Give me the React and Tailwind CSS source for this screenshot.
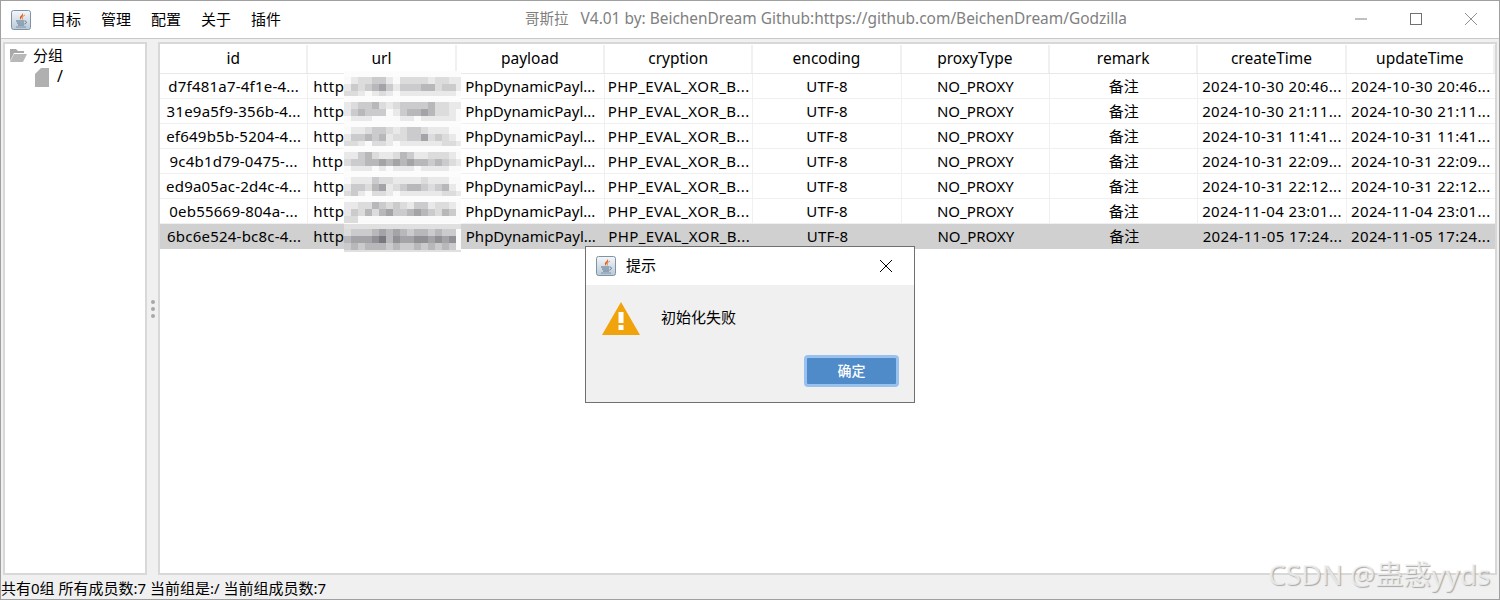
const font = {
  fontFamily: '"Noto Sans", "Noto Sans CJK SC", sans-serif',
};

const columns = [
  "id",
  "url",
  "payload",
  "cryption",
  "encoding",
  "proxyType",
  "remark",
  "createTime",
  "updateTime",
];

const rows = [
  { id: "d7f481a7-4f1e-4...", time: "2024-10-30 20:46..." },
  { id: "31e9a5f9-356b-4...", time: "2024-10-30 21:11..." },
  { id: "ef649b5b-5204-4...", time: "2024-10-31 11:41..." },
  { id: "9c4b1d79-0475-...", time: "2024-10-31 22:09..." },
  { id: "ed9a05ac-2d4c-4...", time: "2024-10-31 22:12..." },
  { id: "0eb55669-804a-...", time: "2024-11-04 23:01..." },
  { id: "6bc6e524-bc8c-4...", time: "2024-11-05 17:24..." },
];

// mosaic over the url column, one string per band of blocks
const mosaic = [
  ["01223310222212211", "13234531333442331", "22101210111111110"],
  ["12334212333342211", "13433301344542210", "01110000110111110"],
  ["01123321233211100", "13343412233523210", "22102210111111221"],
  ["11342112431122210", "23344545454434321", "01110101110111100"],
  ["01113221111211100", "13324512344323410", "23102210111111221"],
  ["11224323213312210", "13242453345432430", "22000000000000000"],
  ["23334545434434330", "45556746556656560", "34344434334343430"],
];

const levels = ["#fafafa", "#e9e9ea", "#dcdcdd", "#cbcbcd", "#b8b8bb", "#a4a4a8", "#909095", "#78787f"];

function Mosaic({ bands, selected }) {
  return (
    <svg
      className={`absolute left-[36px] z-10 ${selected ? "top-0" : "top-[-3px]"}`}
      width="117"
      height="28"
      viewBox="0 0 117 28"
    >
      <rect width="117" height="28" fill={selected ? "#e0e0e0" : "#fcfcfc"} />
      {bands.map((band, y) =>
        band.split("").map((level, x) => (
          <rect
            key={`${x}-${y}`}
            x={x * 7}
            y={(selected ? 5 : 6) + y * 7}
            width="7"
            height="7"
            fill={levels[Number(level)]}
          />
        ))
      )}
    </svg>
  );
}

function JavaIcon() {
  return (
    <svg width="20" height="20" viewBox="0 0 20 20">
      <defs>
        <linearGradient id="javaBg" x1="0" y1="0" x2="0" y2="1">
          <stop offset="0" stopColor="#f4f7fa" />
          <stop offset="1" stopColor="#b9c8d6" />
        </linearGradient>
      </defs>
      <rect x="0.5" y="0.5" width="19" height="19" rx="2" fill="url(#javaBg)" stroke="#7f93a6" />
      <path d="M11.500 2.500c1 2.500-3.500 3.500-2.500 6 .3 .8 1.200 1.500 1.200 1.500-1.200-2.500 3.500-3.500 1.300-7.500z" fill="#e2591c" />
      <path d="M14 5c-2.500 1-3 2.500-2.500 4.500" fill="none" stroke="#e88a4a" strokeWidth="1" />
      <path d="M5 11h8M6 13h7M7 15h6" stroke="#54708c" strokeWidth="1.200" />
      <path d="M13.500 11c2.500 0 2.500 2.500 0 3" fill="none" stroke="#54708c" strokeWidth="1" />
      <path d="M5 17h10" stroke="#7b92a8" strokeWidth="1" />
    </svg>
  );
}

function CloseIcon({ color }) {
  return (
    <svg width="12" height="12" viewBox="0 0 12 12">
      <path d="M0 0l12 12M12 0L0 12" stroke={color} strokeWidth="1" fill="none" />
    </svg>
  );
}

function Cell({ children, className = "" }) {
  return (
    <div className={`min-w-0 text-center leading-[24px] whitespace-nowrap overflow-hidden ${className}`}>
      {children}
    </div>
  );
}

function App() {
  return (
    <div
      className="relative w-[1500px] h-[600px] flex flex-col overflow-hidden bg-[#f0f0f0] border border-[#a0a0a0] text-[15px] leading-[20px] text-black"
      style={font}
    >
      {/* Title bar */}
      <div className="h-[38px] shrink-0 relative flex items-center bg-white border-b border-[#c8c8c8]">
        <div className="ml-[10px] mr-[20px]">
          <JavaIcon />
        </div>
        <div className="flex gap-[20px] mb-[2px]">
          <span>目标</span>
          <span>管理</span>
          <span>配置</span>
          <span>关于</span>
          <span>插件</span>
        </div>
        <div className="absolute left-[524px] top-[7px] text-[#808080] whitespace-pre">
          <span className="text-[14.500px]">哥斯拉</span>
          <span className="text-[15.450px]">   V4.01 by: BeichenDream Github:https://github.com/BeichenDream/Godzilla</span>
        </div>
        <div className="ml-auto flex items-center gap-[43px] pr-[22px] mb-[1px]">
          <svg width="12" height="12" viewBox="0 0 12 12">
            <path d="M0 6h12" stroke="#808080" strokeWidth="1" />
          </svg>
          <svg width="12" height="12" viewBox="0 0 12 12">
            <rect x="0.5" y="0.5" width="11" height="11" fill="none" stroke="#707070" />
          </svg>
          <CloseIcon color="#909090" />
        </div>
      </div>

      {/* Body */}
      <div className="flex-1 min-h-0 flex px-[2px] pt-[3px]">
        {/* Tree */}
        <div className="w-[144px] shrink-0 bg-white border-2 border-[#d8d8d8]">
          <div className="flex items-center h-[20px] mt-[1px] pl-[4px] gap-[5px]">
            <svg width="19" height="15" viewBox="0 0 19 15">
              <path d="M1 1h6l2 2h6v2H5L1 13z" fill="#a8a8a8" />
              <path d="M5 6h13l-4 8H1z" fill="#b8b8b8" />
            </svg>
            <span>分组</span>
          </div>
          <div className="flex items-center h-[20px] pl-[30px] gap-[8px] mt-[2px]">
            <svg width="14" height="19" viewBox="0 0 14 19">
              <path d="M6 0h8v19H0V6z" fill="#b0b0b0" />
            </svg>
            <span className="text-[16px] mb-[2px]">/</span>
          </div>
        </div>

        {/* Splitter */}
        <div className="w-[11px] shrink-0 flex flex-col items-center justify-center gap-[3px]">
          <span className="w-[4px] h-[4px] rounded-full bg-[#a8a8a8]" />
          <span className="w-[4px] h-[4px] rounded-full bg-[#a8a8a8]" />
          <span className="w-[4px] h-[4px] rounded-full bg-[#a8a8a8]" />
        </div>

        {/* Table */}
        <div className="flex-1 min-w-0 bg-white border-2 border-[#d8d8d8]">
          <div className="grid grid-cols-9 h-[30px] items-center border-b border-[#e8e8e8] text-[15.500px]">
            {columns.map((column) => (
              <div
                key={column}
                className="h-[28px] leading-[26px] text-center border-r-2 border-[#f0f0f0]"
              >
                {column}
              </div>
            ))}
          </div>

          {rows.map((row, index) => (
            <div
              key={row.id}
              className={
                index === 6
                  ? "grid grid-cols-9 h-[25px] items-center bg-[#d0d0d0] border-b border-[#d0d0d0]"
                  : "grid grid-cols-9 h-[25px] items-center divide-x divide-[#f0f0f0] border-b border-[#f0f0f0]"
              }
            >
              <Cell className="tracking-[0.22px]">{row.id}</Cell>
              <div className={`relative min-w-0 leading-[24px] tracking-[0.4px] ${index === 3 ? "pl-[4px]" : "pl-[5px]"}`}>
                http
                <Mosaic bands={mosaic[index]} selected={index === 6} />
              </div>
              <Cell>PhpDynamicPayl...</Cell>
              <Cell className="tracking-[0.43px]">PHP_EVAL_XOR_B...</Cell>
              <Cell className="tracking-[0.2px]">UTF-8</Cell>
              <Cell>NO_PROXY</Cell>
              <Cell>备注</Cell>
              <Cell className="tracking-[0.37px]">{row.time}</Cell>
              <Cell className="tracking-[0.37px]">{row.time}</Cell>
            </div>
          ))}
        </div>
      </div>

      {/* Status bar */}
      <div className="h-[24px] shrink-0 pt-[3px] leading-[21px] whitespace-pre">
        共有0组 所有成员数:7 当前组是:/ 当前组成员数:7
      </div>

      {/* Dialog */}
      <div className="absolute left-[584px] top-[245px] w-[330px] h-[157px] flex flex-col border border-[#707070] bg-[#f0f0f0] z-20">
        <div className="h-[38px] shrink-0 flex items-center bg-white pl-[10px] pr-[22px]">
          <JavaIcon />
          <span className="ml-[10px] mb-[2px]">提示</span>
          <span className="ml-auto mb-[1px]">
            <CloseIcon color="#000000" />
          </span>
        </div>
        <div className="flex items-start pl-[16px] pt-[17px]">
          <svg width="38" height="33" viewBox="0 0 38 33">
            <path d="M19 0l19 33H0z" fill="#f0a30a" />
            <rect x="16.500" y="10" width="5" height="11" fill="#fff" />
            <rect x="16.500" y="23" width="5" height="5" fill="#fff" />
          </svg>
          <span className="ml-[21px] mt-[5px]">初始化失败</span>
        </div>
        <div className="mt-auto self-end mr-[15px] mb-[15px] w-[95px] h-[32px] rounded-[4px] border-[3px] border-[#98c1f0] bg-[#4f8bc9] text-white text-[14px] leading-[26px] text-center font-medium">
          确定
        </div>
      </div>

      {/* Watermark */}
      <div className="absolute left-[1267px] top-[553px] z-30 text-[28px] leading-[40px] whitespace-nowrap text-[#f4f4f4]/80 [text-shadow:1px_1px_1px_#a8a8a8]">
        CSDN @蛊惑yyds
      </div>
    </div>
  );
}

export default App;
